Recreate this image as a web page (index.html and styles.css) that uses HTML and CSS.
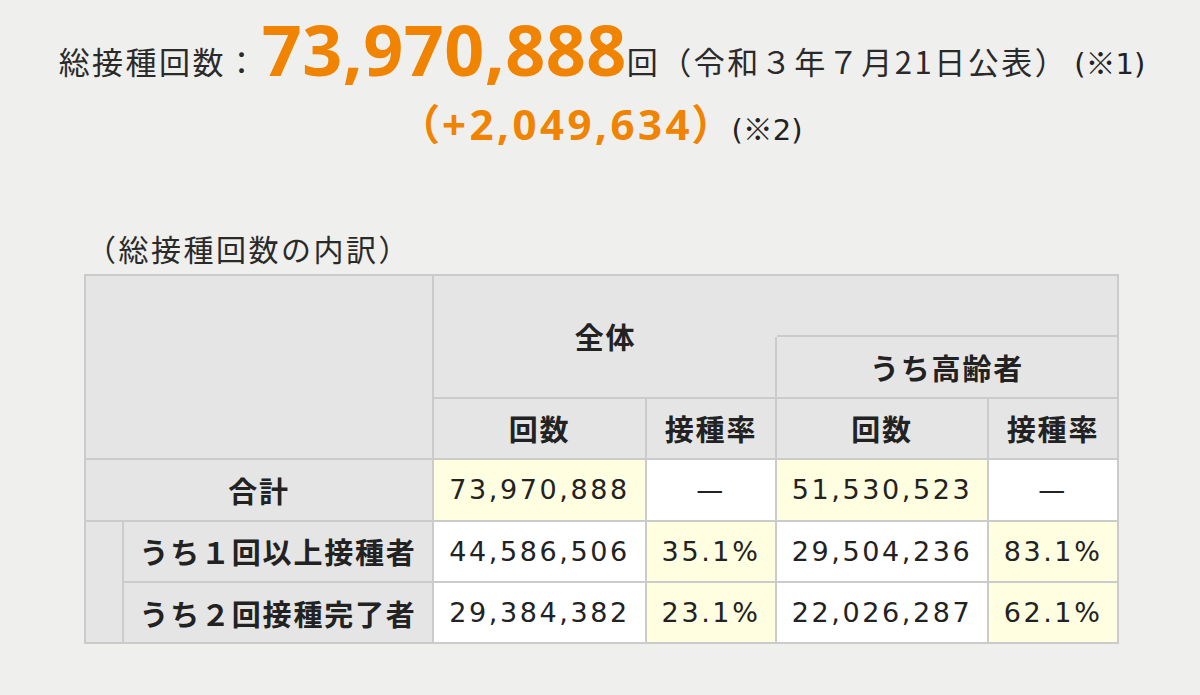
FILE: index.html
```html
<!DOCTYPE html>
<html lang="ja">
<head>
<meta charset="utf-8">
<title>総接種回数</title>
<link rel="stylesheet" href="styles.css">
</head>
<body>
<main class="page">
  <section class="summary">
    <p class="total"><span class="label">総接種回数：</span><span class="big">73,970,888</span><span class="label">回（令和３年７月21日公表）</span><span class="note">(<span class="mark">※</span>1)</span></p>
    <p class="diff"><span class="diff-num">（+2,049,634）</span><span class="note note-tight">(<span class="mark">※</span>2)</span></p>
  </section>
  <h2 class="caption">（総接種回数の内訳）</h2>
  <table class="breakdown">
    <colgroup>
      <col class="c-indent">
      <col class="c-label">
      <col class="c-num">
      <col class="c-rate">
      <col class="c-num2">
      <col class="c-rate">
    </colgroup>
    <thead>
      <tr>
        <th rowspan="3" colspan="2" class="corner"></th>
        <th rowspan="2" colspan="2" class="all">全体</th>
        <th colspan="2" class="blank"></th>
      </tr>
      <tr>
        <th colspan="2" class="elder">うち高齢者</th>
      </tr>
      <tr>
        <th>回数</th>
        <th>接種率</th>
        <th>回数</th>
        <th>接種率</th>
      </tr>
    </thead>
    <tbody>
      <tr>
        <th colspan="2" class="row-head">合計</th>
        <td class="hl">73,970,888</td>
        <td>—</td>
        <td class="hl">51,530,523</td>
        <td>—</td>
      </tr>
      <tr>
        <th rowspan="2" class="indent"></th>
        <th class="row-head">うち１回以上接種者</th>
        <td>44,586,506</td>
        <td class="hl">35.1%</td>
        <td>29,504,236</td>
        <td class="hl">83.1%</td>
      </tr>
      <tr>
        <th class="row-head">うち２回接種完了者</th>
        <td>29,384,382</td>
        <td class="hl">23.1%</td>
        <td>22,026,287</td>
        <td class="hl">62.1%</td>
      </tr>
    </tbody>
  </table>
</main>
</body>
</html>
```

FILE: styles.css
```css
html, body {
  margin: 0;
  padding: 0;
}

body {
  background: #efefee;
  color: #2a2a2a;
  font-family: "Noto Sans CJK JP", "Noto Sans", sans-serif;
}

.page {
  width: 1200px;
  height: 695px;
  overflow: hidden;
}

.summary {
  text-align: center;
  padding-top: 12px;
}

.total {
  margin: 0;
  height: 80px;
  line-height: 80px;
  font-size: 31px;
  white-space: nowrap;
  padding-left: 4px;
}

.label {
  letter-spacing: 2.5px;
}

.big {
  font-family: "Noto Sans", sans-serif;
  font-weight: 700;
  font-size: 70px;
  line-height: 1;
  letter-spacing: 0.5px;
  color: #f08300;
  margin-left: 2px;
  position: relative;
  top: 2px;
}

.note {
  font-family: "DejaVu Sans", "Noto Sans CJK JP", sans-serif;
  font-size: 29px;
  margin-left: 6px;
  color: #222;
}

.note-tight {
  margin-left: 14px;
}

.mark {
  font-family: "Noto Sans CJK JP", sans-serif;
  font-size: 30px;
}

.diff {
  margin: 0;
  height: 64px;
  line-height: 64px;
  padding-left: 20px;
  white-space: nowrap;
}

.diff-num {
  font-family: "Noto Sans", "Noto Sans CJK JP", sans-serif;
  font-weight: 700;
  font-size: 42px;
  letter-spacing: 3.5px;
  color: #f08300;
  font-feature-settings: "palt";
}

.caption {
  margin: 70px 0 0 86px;
  font-size: 30px;
  font-weight: 400;
  letter-spacing: 2.5px;
  line-height: 44px;
  height: 48px;
  color: #2a2a2a;
}

.breakdown {
  margin-left: 84px;
  width: 1035px;
  table-layout: fixed;
  border-collapse: separate;
  border-spacing: 0;
  border-top: 2px solid #cbcbcb;
  border-left: 2px solid #cbcbcb;
}

.c-indent { width: 38px; }
.c-label { width: 310px; }
.c-num { width: 213px; }
.c-rate { width: 130px; }
.c-num2 { width: 212px; }

.breakdown tr {
  height: 61.4px;
}

.breakdown th,
.breakdown td {
  padding: 0;
  border-right: 2px solid #cbcbcb;
  border-bottom: 2px solid #cbcbcb;
  text-align: center;
  vertical-align: middle;
}

.breakdown th {
  background: #e5e5e5;
  font-weight: 700;
  font-size: 29px;
  letter-spacing: 1.8px;
  color: #222;
}

.breakdown th.all {
  border-right: none;
}

.breakdown th.elder {
  box-shadow: -2px 0 0 #cbcbcb;
}

.breakdown td {
  background: #ffffff;
  font-family: "DejaVu Sans", sans-serif;
  font-size: 27px;
  letter-spacing: 2.6px;
  color: #222;
}

.breakdown td.hl {
  background: #fffee0;
}
```
